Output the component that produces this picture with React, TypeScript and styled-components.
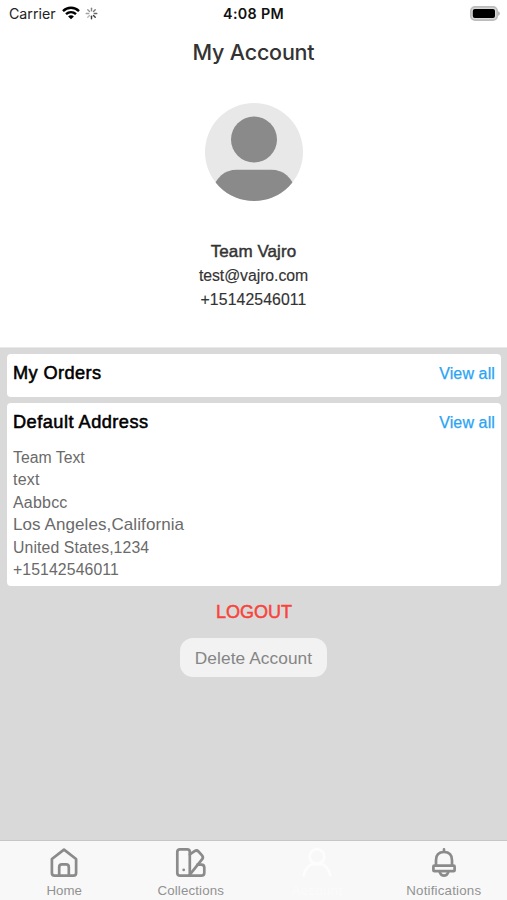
import React from "react";
import styled, { createGlobalStyle } from "styled-components";

const GlobalStyle = createGlobalStyle`
  * { box-sizing: border-box; }
  body { margin: 0; background: #fff; }
`;

const Screen = styled.div`
  display: flex;
  flex-direction: column;
  width: 507px;
  height: 900px;
  overflow: hidden;
  background: #d9d9d9;
  font-family: "Liberation Sans", Arial, sans-serif;
`;

const StatusBar = styled.header`
  display: grid;
  grid-template-columns: 1fr auto 1fr;
  align-items: center;
  height: 26px;
  padding: 0 7px 0 7px;
  background: #fff;
  font-family: Inter, sans-serif;
  svg { display: block; }
`;

const Carrier = styled.div`
  display: flex;
  align-items: center;
  padding-left: 2px;
  font-size: 14.2px;
  color: #222;
  svg:first-of-type { margin-left: 6px; }
  svg:last-of-type { margin-left: 5px; }
`;

const Clock = styled.time`
  font-size: 14.3px;
  font-weight: 600;
  letter-spacing: 0.3px;
  color: #111;
`;

const Battery = styled.div`
  justify-self: end;
`;

const Profile = styled.section`
  display: flex;
  flex-direction: column;
  align-items: center;
  height: 322px;
  flex: none;
  background: #fff;
  border-bottom: 1px solid #eaeaea;
`;

const Title = styled.h1`
  margin: 11px 0 0;
  height: 30px;
  font: 500 21.5px/30px Inter, sans-serif;
  letter-spacing: -0.2px;
  color: #333;
`;

const Avatar = styled.svg`
  display: block;
  margin: 36px 0 39px;
`;

const ProfileLine = styled.div<{ $strong?: boolean; $spacing?: number }>`
  height: 24px;
  line-height: 24px;
  font-size: ${(p) => (p.$strong ? 17 : 15.8)}px;
  letter-spacing: ${(p) => p.$spacing ?? 0}px;
  color: #333;
  -webkit-text-stroke: ${(p) => (p.$strong ? 0.45 : 0.15)}px #333;
`;

const Content = styled.main`
  flex: 1;
  display: flex;
  flex-direction: column;
  padding: 6px 6px 0 7px;
`;

const Card = styled.section<{ $height: number }>`
  height: ${(p) => p.$height}px;
  margin-bottom: 6px;
  padding: 0 6px;
  border-radius: 4px;
  background: #fff;
`;

const CardHeader = styled.div`
  display: flex;
  justify-content: space-between;
  align-items: center;
  height: 39px;
`;

const CardTitle = styled.h2<{ $spacing: number }>`
  margin: 0;
  font-size: 18.2px;
  font-weight: 400;
  letter-spacing: ${(p) => p.$spacing}px;
  color: #000;
  -webkit-text-stroke: 0.55px #000;
`;

const ViewAll = styled.a`
  font-size: 16px;
  letter-spacing: 0.12px;
  color: #29a4f3;
  -webkit-text-stroke: 0.25px #29a4f3;
`;

const AddressLine = styled.div<{ $size?: number; $spacing?: number }>`
  height: 22.4px;
  line-height: 22.4px;
  font-size: ${(p) => p.$size ?? 15.8}px;
  letter-spacing: ${(p) => p.$spacing ?? 0}px;
  color: #6a6a6a;
`;

const Address = styled.div`
  padding-top: 5px;
`;

const Logout = styled.button`
  align-self: center;
  height: 30px;
  margin: 5px 0 0;
  padding: 1px 0 0;
  border: 0;
  background: none;
  font: 400 18px/29px "Liberation Sans", Arial, sans-serif;
  color: #f8433b;
  -webkit-text-stroke: 0.5px #f8433b;
`;

const DeleteButton = styled.button`
  align-self: center;
  width: 147px;
  height: 39px;
  margin: 11px 1px 0 0;
  padding: 2px 0 0;
  border: 0;
  border-radius: 13px;
  background: #f2f2f2;
  font: 400 17.3px/37px "Liberation Sans", Arial, sans-serif;
  letter-spacing: 0.08px;
  color: #858585;
`;

const TabBar = styled.nav`
  display: grid;
  grid-template-columns: repeat(4, 1fr);
  flex: none;
  height: 60px;
  padding-left: 1px;
  border-top: 1px solid #c6c6c6;
  background: #f8f8f8;
`;

const Tab = styled.a<{ $active?: boolean; $spacing?: number }>`
  display: flex;
  flex-direction: column;
  align-items: center;
  padding-top: 6px;
  font-size: 13.3px;
  line-height: 16px;
  letter-spacing: ${(p) => p.$spacing ?? 0}px;
  color: ${(p) => (p.$active ? "#fbfbfb" : "#929292")};
  svg {
    display: block;
    margin-bottom: 4px;
    fill: none;
    stroke: ${(p) => (p.$active ? "#fdfdfd" : "#8b8b8b")};
    stroke-width: 2.7;
    stroke-linecap: round;
    stroke-linejoin: round;
  }
`;

const WifiIcon = () => (
  <svg width="18" height="14" viewBox="0 0 18 14">
    <g fill="none" stroke="#000" strokeWidth="2.4">
      <path d="M1 5.1C5.5.7 12.5.7 17 5.1" />
      <path d="M4 8.2C6.9 5.5 11.1 5.5 14 8.2" />
    </g>
    <path d="M9 13.3 6.1 10.4C7.6 8.9 10.4 8.9 11.9 10.4Z" />
  </svg>
);

const spokes = [0.95, 0.35, 0.45, 0.5, 0.6, 0.65, 0.75, 0.95];

const Spinner = () => (
  <svg width="13" height="13" viewBox="-6.5 -6.5 13 13">
    {spokes.map((opacity, i) => (
      <line
        key={i}
        y1="2.8"
        y2="5.3"
        stroke="#333"
        strokeWidth="1.4"
        strokeLinecap="round"
        opacity={opacity}
        transform={`rotate(${i * 45})`}
      />
    ))}
  </svg>
);

const BatteryIcon = () => (
  <svg width="30" height="15" viewBox="0 0 30 15">
    <rect x=".8" y=".9" width="26.4" height="13.2" rx="4.2" fill="#d8d8d8" stroke="#bcbcbc" strokeWidth="1.6" />
    <rect x="2.8" y="3" width="22.2" height="9" rx="2" fill="#000" />
    <path d="M28.2 5.2C30.3 6 30.3 9 28.2 9.8Z" fill="#aaa" />
  </svg>
);

export default function App() {
  return (
    <>
      <GlobalStyle />
      <Screen>
        <StatusBar>
          <Carrier>
            Carrier
            <WifiIcon />
            <Spinner />
          </Carrier>
          <Clock>4:08 PM</Clock>
          <Battery>
            <BatteryIcon />
          </Battery>
        </StatusBar>
        <Profile>
          <Title>My Account</Title>
          <Avatar width="98" height="98" viewBox="0 0 98 98">
            <defs>
              <clipPath id="avatar-circle">
                <circle cx="49" cy="49" r="49" />
              </clipPath>
            </defs>
            <g clipPath="url(#avatar-circle)">
              <rect width="98" height="98" fill="#e8e8e8" />
              <circle cx="49" cy="36.5" r="23" fill="#8a8a8a" />
              <path d="M5 90C12 74 19 66.8 32 66.8H66C79 66.8 86 74 93 90V98H5Z" fill="#8a8a8a" />
            </g>
          </Avatar>
          <ProfileLine $strong $spacing={0.08}>Team Vajro</ProfileLine>
          <ProfileLine $spacing={-0.06}>test@vajro.com</ProfileLine>
          <ProfileLine $spacing={0.1}>+15142546011</ProfileLine>
        </Profile>
        <Content>
          <Card $height={43}>
            <CardHeader>
              <CardTitle $spacing={0.4}>My Orders</CardTitle>
              <ViewAll>View all</ViewAll>
            </CardHeader>
          </Card>
          <Card $height={183}>
            <CardHeader>
              <CardTitle $spacing={0.48}>Default Address</CardTitle>
              <ViewAll>View all</ViewAll>
            </CardHeader>
            <Address>
              <AddressLine>Team Text</AddressLine>
              <AddressLine $size={16} $spacing={0.2}>text</AddressLine>
              <AddressLine $size={16} $spacing={0.2}>Aabbcc</AddressLine>
              <AddressLine $size={17} $spacing={0.09}>Los Angeles,California</AddressLine>
              <AddressLine $spacing={0.1}>United States,1234</AddressLine>
              <AddressLine $spacing={0.1}>+15142546011</AddressLine>
            </Address>
          </Card>
          <Logout>LOGOUT</Logout>
          <DeleteButton>Delete Account</DeleteButton>
        </Content>
        <TabBar>
          <Tab>
            <svg width="32" height="32" viewBox="0 0 32 32">
              <path d="M3.9 12 16 2.6 28.1 12V26Q28.1 28.7 25.4 28.7H6.6Q3.9 28.7 3.9 26Z" />
              <path d="M11.2 28.5V20.2Q11.2 17.4 14 17.4H18Q20.8 17.4 20.8 20.2V28.5" />
            </svg>
            Home
          </Tab>
          <Tab $spacing={0.15}>
            <svg width="32" height="32" viewBox="0 0 32 32">
              <path d="M14.8 28.7H5Q2.3 28.7 2.3 26V5Q2.3 2.3 5 2.3H12.1Q14.8 2.3 14.8 5Z" />
              <path d="M14.8 7.4 19.6 4.1Q21.8 2.7 23.5 4.5L27 8.3Q28.8 10.3 27 12.4L15 27.3" />
              <path d="M22.5 17.6H26.2Q29.3 17.6 29.3 20.6V25.7Q29.3 28.7 26.2 28.7H14.8" />
              <path d="M8.7 22.8V22.9" />
            </svg>
            Collections
          </Tab>
          <Tab $active $spacing={0.4}>
            <svg width="32" height="32" viewBox="0 0 32 32">
              <circle cx="16" cy="9.5" r="7.3" />
              <path d="M2.7 28.5C4 22 8 17.5 12 17.2H20C24 17.5 28 22 29.3 28.5" />
            </svg>
            Account
          </Tab>
          <Tab $spacing={0.2}>
            <svg width="32" height="32" viewBox="0 0 32 32">
              <path d="M16 2.4V5M8 18.4V13.2C8 8 11 5 16 5S24 8 24 13.2V18.4" />
              <rect x="5.4" y="18.6" width="21.2" height="5.6" rx="1" />
              <path d="M11.8 25.4Q13 28.7 16 28.7T20.2 25.4" />
            </svg>
            Notifications
          </Tab>
        </TabBar>
      </Screen>
    </>
  );
}
